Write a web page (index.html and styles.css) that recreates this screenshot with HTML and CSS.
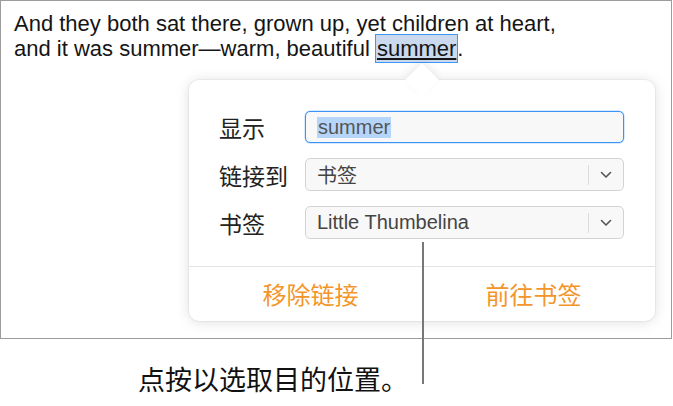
FILE: index.html
```html
<!DOCTYPE html>
<html lang="zh">
<head>
<meta charset="utf-8">
<link rel="stylesheet" href="styles.css">
</head>
<body>
<div class="frame">
  <p class="story">And they both sat there, grown up, yet children at heart,<br>and it was summer—warm, beautiful <span class="sel">summer</span>.</p>
  <div class="popover">
    <div class="arrow"></div>
    <div class="form">
      <label class="lbl">显示</label>
      <div class="field focus"><span class="hl">summer</span></div>
      <label class="lbl">链接到</label>
      <div class="field select"><span class="val">书签</span><span class="chev"><svg width="12" height="8" viewBox="0 0 12 8"><path d="M1.5 1.5 L6 6 L10.5 1.5" fill="none" stroke="#555" stroke-width="1.6" stroke-linecap="round" stroke-linejoin="round"/></svg></span></div>
      <label class="lbl">书签</label>
      <div class="field select"><span class="val">Little Thumbelina</span><span class="chev"><svg width="12" height="8" viewBox="0 0 12 8"><path d="M1.5 1.5 L6 6 L10.5 1.5" fill="none" stroke="#555" stroke-width="1.6" stroke-linecap="round" stroke-linejoin="round"/></svg></span></div>
    </div>
    <div class="actions">
      <span class="btn">移除链接</span>
      <span class="btn">前往书签</span>
    </div>
  </div>
  <div class="callout"></div>
</div>
<p class="caption">点按以选取目的位置。</p>
</body>
</html>
```
FILE: styles.css
```css
html, body {
  margin: 0;
  padding: 0;
  background: #fff;
}
body {
  width: 673px;
  height: 406px;
  overflow: hidden;
  font-family: "Liberation Sans", "Noto Sans CJK SC", sans-serif;
  color: #111;
}
.frame {
  position: relative;
  width: 670px;
  height: 337px;
  border: 1px solid #9c9c9c;
}
.story {
  margin: 0;
  padding: 10px 0 0 13px;
  font-size: 22px;
  line-height: 25px;
  color: #151515;
}
.sel {
  background: #cad9ee;
  outline: 1.5px solid #3e97f7;
  text-decoration: underline;
  text-decoration-thickness: 1.5px;
  text-underline-offset: 2px;
  padding: 1px 1px;
}
.popover {
  position: absolute;
  left: 188px;
  top: 79px;
  width: 466px;
  height: 241px;
  background: #fff;
  border-radius: 10px;
  box-shadow: 0 0 0 1px rgba(0,0,0,0.04), 0 1px 14px rgba(0,0,0,0.13);
  display: flex;
  flex-direction: column;
}
.arrow {
  position: absolute;
  left: 221px;
  top: -12px;
  width: 24px;
  height: 24px;
  background: #fff;
  transform: rotate(45deg);
  box-shadow: -3px -3px 8px rgba(0,0,0,0.07);
  border-radius: 3px 0 0 0;
}
.form {
  position: relative;
  display: grid;
  grid-template-columns: 86px 319px;
  row-gap: 15px;
  padding: 31px 0 0 30px;
  align-items: center;
}
.lbl {
  font-family: "Noto Sans CJK SC", sans-serif;
  font-size: 23px;
  line-height: 28px;
  color: #222;
}
.field {
  height: 31px;
  border: 1px solid #d3d3d3;
  border-radius: 5px;
  background: #f8f8f8;
  display: flex;
  align-items: center;
  padding-left: 11px;
  font-size: 20px;
  color: #444;
}
.field.focus {
  height: 30px;
  border: 1.5px solid #3a93f5;
  box-shadow: 0 0 0 0.5px rgba(58,147,245,0.4);
}
.hl {
  background: #b5d5fb;
  color: #555;
  line-height: 21px;
  padding: 0 1px;
}
.select .val {
  flex: 1;
}
.chev {
  width: 34px;
  height: 20px;
  border-left: 1px solid #dcdcdc;
  display: flex;
  align-items: center;
  justify-content: center;
}
.actions {
  margin-top: auto;
  height: 54px;
  border-top: 1px solid #e3e3e3;
  display: flex;
  padding: 0 10px;
  align-items: center;
}
.btn {
  flex: 1;
  text-align: center;
  font-family: "Noto Sans CJK SC", sans-serif;
  font-size: 24px;
  line-height: 30px;
  color: #f4952a;
}
.callout {
  position: absolute;
  left: 421px;
  top: 241px;
  width: 2px;
  height: 142px;
  background: #777;
}
.caption {
  margin: 0;
  padding: 24px 0 0 138px;
  font-family: "Noto Sans CJK SC", sans-serif;
  font-size: 27px;
  line-height: 32px;
  color: #111;
}
```
